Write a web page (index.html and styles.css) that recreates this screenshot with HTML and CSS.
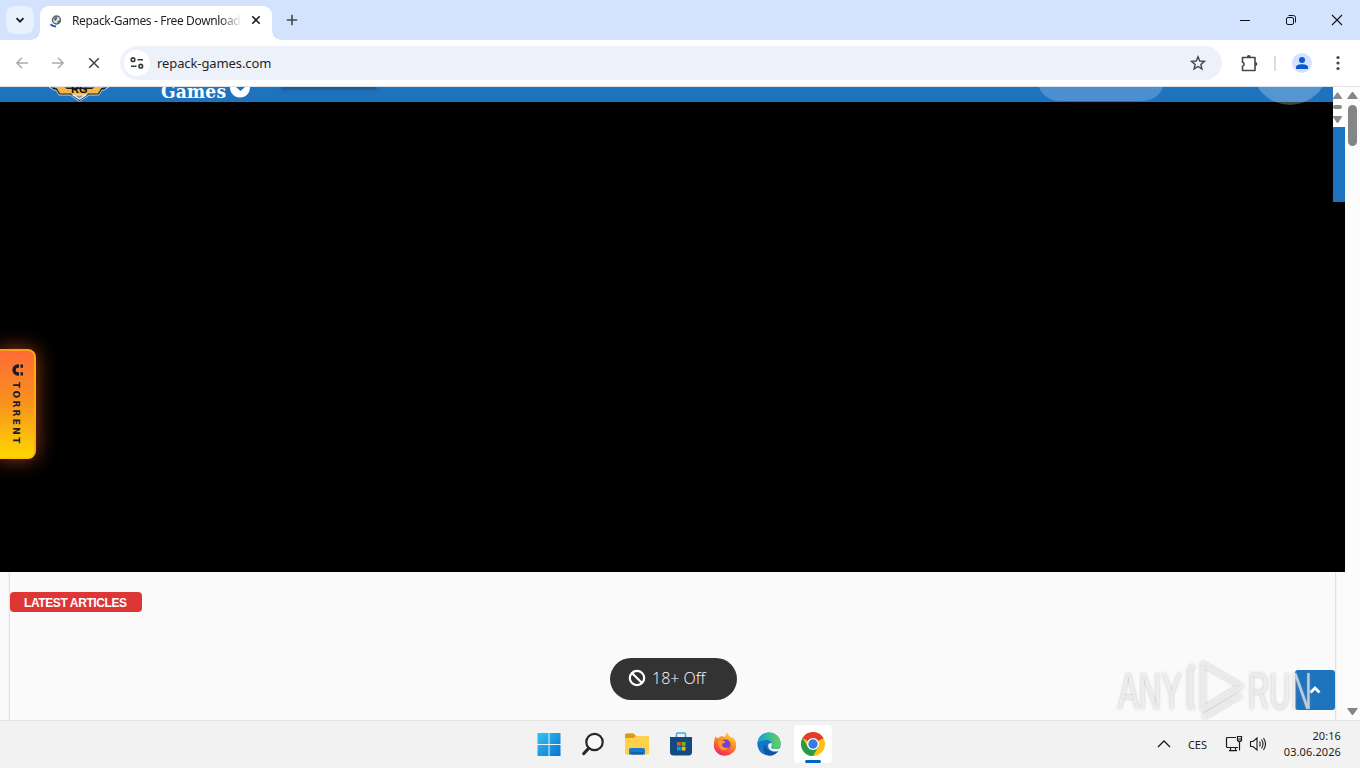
FILE: index.html
```html
<!DOCTYPE html>
<html lang="en">
<head>
    <meta charset="utf-8">
    <title>Repack-Games - Free Download</title>
    <link rel="stylesheet" href="styles.css">
</head>
<body>
    <div class="titlebar">
        <div class="tab-search">
            <svg width="10" height="10" viewBox="0 0 10 10"><path d="M1.500 3.200 5 6.700l3.500-3.500" fill="none" stroke="#1b1c20" stroke-width="1.800"/></svg>
        </div>
        <div class="tab">
            <svg class="favicon" width="14" height="16" viewBox="0 0 14 16">
                <circle cx="7.500" cy="8" r="4" fill="#dfe5e8" stroke="#59636b" stroke-width="1.400"/>
                <path d="M4.500 7 7 4.500 8.500 6 6.500 9zM8.500 9l2.500-1v2.500L8.500 12z" fill="#59636b"/>
                <path d="M1.500 12.200Q3.500 14.300 7 14.500" fill="none" stroke="#2860c4" stroke-width="2"/>
            </svg>
            <span class="tab-title">Repack-Games - Free Download</span>
            <svg class="tab-close" width="10" height="10" viewBox="0 0 10 10"><path d="M1.300 1.300l7.400 7.400M8.700 1.300 1.300 8.700" stroke="#1f1f1f" stroke-width="1.600"/></svg>
        </div>
        <svg class="new-tab" width="12" height="12" viewBox="0 0 12 12"><path d="M6 .8v10.400M.8 6h10.400" stroke="#43474e" stroke-width="1.600"/></svg>
        <div class="window-buttons">
            <svg width="12" height="12" viewBox="0 0 12 12"><path d="M1 6.500h10" stroke="#111"/></svg>
            <svg width="12" height="12" viewBox="0 0 12 12" fill="none" stroke="#111"><rect x="1.500" y="3.500" width="7" height="7" rx="1.500"/><path d="M3.500 1.500H8.500a2 2 0 0 1 2 2v5"/></svg>
            <svg width="12" height="12" viewBox="0 0 12 12"><path d="M1 1l10 10M11 1 1 11" stroke="#111" stroke-width="1.100"/></svg>
        </div>
    </div>

    <div class="toolbar">
        <div class="nav">
            <svg width="14" height="14" viewBox="0 0 14 14" fill="none" stroke="#aaacae" stroke-width="1.500"><path d="M13 7H2M7 1.800 1.800 7 7 12.200"/></svg>
            <svg width="14" height="14" viewBox="0 0 14 14" fill="none" stroke="#aaacae" stroke-width="1.500"><path d="M1 7h11M7 1.800 12.200 7 7 12.200"/></svg>
            <svg width="14" height="14" viewBox="0 0 14 14" fill="none" stroke="#45484c" stroke-width="1.600"><path d="M2.200 2.200l9.600 9.600M11.800 2.200 2.200 11.800"/></svg>
        </div>
        <div class="omnibox">
            <div class="site-info">
                <svg width="14" height="12" viewBox="0 0 14 12" fill="none" stroke="#37393d" stroke-width="1.600"><circle cx="3" cy="2.700" r="1.800"/><path d="M7.500 2.700H13M1 9.200h5.500"/><circle cx="10.800" cy="9.200" r="1.800"/></svg>
            </div>
            <span class="url">repack-games.com</span>
            <svg class="star" width="16" height="16" viewBox="0 0 16 16"><path d="M8 1.800l1.750 4.250 4.600.35-3.500 3 1.100 4.500L8 11.500l-3.950 2.400 1.100-4.500-3.500-3 4.600-.35z" fill="none" stroke="#44474b" stroke-width="1.400"/></svg>
        </div>
        <svg class="extensions" width="18" height="18" viewBox="0 0 18 18"><path d="M2.500 3.500h12.500v13H2.500v-4.300a2 2 0 0 0 0-3.900z" fill="none" stroke="#44474b" stroke-width="1.600" stroke-linejoin="round"/><path d="M6.800 3a2 2 0 0 1 4 0zM15.300 8a2 2 0 0 1 0 4z" fill="#44474b"/></svg>
        <span class="divider"></span>
        <div class="profile">
            <svg width="14" height="14" viewBox="0 0 14 14" fill="#0b57d0"><circle cx="7" cy="4" r="3"/><path d="M1 13v-1.800C1 9 4.500 8.200 7 8.200s6 .8 6 3V13z"/></svg>
        </div>
        <svg class="menu" width="4" height="16" viewBox="0 0 4 16" fill="#44474b"><circle cx="2" cy="2.500" r="1.600"/><circle cx="2" cy="8" r="1.600"/><circle cx="2" cy="13.500" r="1.600"/></svg>
    </div>

    <div class="viewport">
        <div class="page">
            <div class="hero">
                <div class="hero-main">
                    <div class="site-header">
                        <svg class="logo" width="64" height="15" viewBox="0 0 64 15">
                            <path d="M2 0h60l-5 3h-2l-3 5H42l-9.500 6.500L23 8H12L9 3H7z" fill="#15202b" stroke="#e8edf2" stroke-width=".8"/>
                            <path d="M7 0h10l3 2h25l3-2h9l-3 1.500-3 5H41l-8.500 5.500L24 6.500H13l-3-5z" fill="#f6b73c"/>
                            <path d="M24 7.500h17l-8.500 5.500z" fill="#eef2f7"/><path d="M28 8.500h9l-4.500 3z" fill="#8c99a8"/>
                            <text x="24" y="6" class="logo-rg">RG</text>
                        </svg>
                        <span class="site-name">Games</span>
                        <svg class="badge" width="22" height="15" viewBox="0 0 22 15"><path d="M1 0h20c0 6-4 10.500-10 10.500S1 6 1 0z" fill="#fff"/><path d="M7 0h9l-4.500 4z" fill="#1e73be"/></svg>
                        <span class="header-shadow"></span>
                        <span class="search-pill"></span>
                        <span class="round-button"></span>
                    </div>
                </div>
                <div class="hero-side">
                    <div class="mini-scroll">
                        <svg width="12" height="40" viewBox="0 0 12 40" fill="#8b8b8b"><path d="M4 5.500h1l4 5.500v1H0v-1z"/><rect x="0" y="18" width="9" height="4" rx="2"/><path d="M0 29h9v1l-4 6H4l-4-6z"/></svg>
                    </div>
                    <div class="side-blue"></div>
                </div>
                <div class="torrent">
                    <svg width="12" height="12" viewBox="0 0 12 12"><path d="M7 2H6a4 4 0 0 0 0 8h1" fill="none" stroke="#1d1a2b" stroke-width="3.400"/><path d="M8.500.4H11v3.300H8.500zM8.500 8.300H11v3.300H8.500z" fill="#1d1a2b"/></svg>
                    <span>TORRENT</span>
                </div>
            </div>
            <div class="articles">
                <span class="label">LATEST ARTICLES</span>
            </div>
            <div class="adult-toggle">
                <svg width="18" height="18" viewBox="0 0 18 18" fill="none" stroke="#fff" stroke-width="2.200"><circle cx="9" cy="9" r="7.200"/><path d="M4 4l10 10"/></svg>
                <span>18+ Off</span>
            </div>
            <div class="to-top">
                <svg width="12" height="10" viewBox="0 0 12 10"><path d="M1.500 7.500 6 3l4.500 4.500" fill="none" stroke="#fff" stroke-width="2.800"/></svg>
            </div>
        </div>
        <div class="scrollbar">
            <svg width="11" height="9" viewBox="0 0 11 9" fill="#858585"><path d="M5 1h1l4.500 6v1H.5V7z"/></svg>
            <span class="thumb"></span>
            <svg class="down" width="11" height="9" viewBox="0 0 11 9" fill="#858585"><path d="M.5 1h10v1L6 8H5L.5 2z"/></svg>
        </div>
        <svg class="watermark" width="204" height="72" viewBox="0 0 204 72">
            <defs>
                <g id="mark">
                    <text x="4" y="56" textLength="64" lengthAdjust="spacingAndGlyphs">ANY</text>
                    <text x="134" y="56" textLength="64" lengthAdjust="spacingAndGlyphs">RUN</text>
                    <path d="M89 11 127 33 89 56zM80 13l-4 2.500v38l4 1.500M89 64l38-22"/>
                </g>
            </defs>
            <use href="#mark" class="mark-shadow"/>
            <use href="#mark" class="mark-face"/>
        </svg>
    </div>

    <div class="taskbar">
        <div class="apps">
            <div class="app">
                <svg width="24" height="24" viewBox="0 0 24 24"><defs><linearGradient id="win" x2="1" y2="1"><stop offset="0" stop-color="#35c4f5"/><stop offset="1" stop-color="#0872cf"/></linearGradient></defs><path d="M.5 1H11.500v11H.5zM12.500 1h11v11h-11zM.5 13h11v11H.5zM12.500 13h11v11h-11z" fill="url(#win)"/></svg>
            </div>
            <div class="app">
                <svg width="24" height="24" viewBox="0 0 24 24" fill="none" stroke="#27282a"><circle cx="13.500" cy="10" r="8.200" stroke-width="2.200" fill="#f7f8f8"/><path d="M7.500 16.500 2.800 21.500" stroke-width="3.200" stroke-linecap="round"/></svg>
            </div>
            <div class="app">
                <svg width="26" height="24" viewBox="0 0 26 24"><path d="M1 3q0-1.500 1.500-1.500h7L12 4h12q1 0 1 1v16q0 1.500-1.500 1.500h-21Q1 22.500 1 21z" fill="#ffd04b"/><path d="M1 6V3q0-1.500 1.500-1.500h7L12 4 9.500 6z" fill="#d99b10"/><path d="M5 22.500V18q0-2 2-2h12q2 0 2 2v4.500z" fill="#1879cf"/><path d="M7 20h12v2.500H7z" fill="#1260ad"/></svg>
            </div>
            <div class="app">
                <svg width="24" height="24" viewBox="0 0 24 24"><path d="M7.500 6V2q0-1 1-1h7q1 0 1 1v4" fill="none" stroke="#43ace3" stroke-width="1.600"/><path d="M1 5h22v15q0 3.500-3.500 3.500h-15Q1 23.500 1 20z" fill="#134a80"/><path d="M8 10h3.800v3.800H8z" fill="#f25022"/><path d="M12.700 10h3.800v3.800h-3.800z" fill="#7fba00"/><path d="M8 14.700h3.800v3.800H8z" fill="#00a4ef"/><path d="M12.700 14.700h3.800v3.800h-3.800z" fill="#ffb900"/></svg>
            </div>
            <div class="app">
                <svg width="24" height="24" viewBox="0 0 24 24"><defs><linearGradient id="fox" x1=".8" x2=".3" y2="1"><stop offset="0" stop-color="#ffdf3e"/><stop offset=".45" stop-color="#ff8a23"/><stop offset="1" stop-color="#f5215d"/></linearGradient></defs><path d="M2.500 4.500 5 6.500Q7 3.500 9.500 4L12 5q0-3 2.500-4.500 1 3.500 4 5.500l1-1Q23.500 9 23.200 13.500A11.200 10.500 0 0 1 .8 13Q.8 8 2.500 4.500z" fill="url(#fox)"/><circle cx="12.500" cy="12.500" r="5" fill="#7541cf"/><path d="M5 9q3-1.500 5.500 0l2 .5q-.5 2-3 2-1 1.500 0 3 3 2.500 6 .5-2 4-6 3-5-2-4.500-9z" fill="#ff9a2a"/></svg>
            </div>
            <div class="app">
                <svg width="24" height="24" viewBox="0 0 24 24"><defs><linearGradient id="edge" x2="1"><stop offset="0" stop-color="#189fd8"/><stop offset="1" stop-color="#62d653"/></linearGradient></defs><circle cx="12" cy="12" r="11.600" fill="#1476ca"/><path d="M.5 11A11.600 11.600 0 0 1 23.600 11c.4 4-2.600 6-6.600 6-3 0-3.500-1.500-2.500-3s.3-6-5-6C5 8 2 9.500.5 11z" fill="url(#edge)"/><path d="M8.500 12.500c0 6 6 8.500 13.300 5.700C19 22.500 15 24 11.500 23.400 6 22 5 15 8.500 12.500z" fill="#12549f"/><path d="M12 11.500c-1.500 2-1.300 6 3.500 7.700 3 .8 5.500.2 7-1l1.500-3c-2 1.500-4 2-6.500 1.900-3.500-.2-4-1.800-3-3.100.6-1 .6-2.200 0-3z" fill="#f3f3f3"/></svg>
            </div>
            <div class="app active">
                <svg width="26" height="26" viewBox="0 0 26 26"><circle cx="13" cy="13" r="12" fill="#fbc116"/><path d="M13 13 2.600 7A12 12 0 0 1 23.400 7z" fill="#e33b2e"/><path d="M2.600 7a12 12 0 0 0 10.400 18l5.200-9L13 13 7.800 16z" fill="#269c49"/><circle cx="13" cy="13" r="6" fill="#fff"/><circle cx="13" cy="13" r="4.700" fill="#3779e5"/></svg>
            </div>
        </div>
        <div class="tray">
            <svg class="chevron" width="14" height="8" viewBox="0 0 14 8"><path d="M1 7l6-6 6 6" fill="none" stroke="#1b1b1b" stroke-width="1.300"/></svg>
            <span class="lang">CES</span>
            <svg class="network" width="18" height="18" viewBox="0 0 18 18" fill="none" stroke="#1b1b1b" stroke-width="1.200"><path d="M11 2.500H2.500Q1.500 2.500 1.500 3.500v8q0 1 1 1h10.500M5.500 12.500v3M4 15.600h8M10.500 12.500v3M14.500 7v8.500M12.500 1.500h4v4q-2 2-4 0zM12.500 4h4"/></svg>
            <svg class="volume" width="18" height="16" viewBox="0 0 18 16" fill="none" stroke="#1b1b1b" stroke-width="1.100"><path d="M1.500 5.500H4l4-3.500v12L4 10.500H1.500zM10.500 5.500q1.500 2.500 0 5M12.500 3.500q3 4.500 0 9M14.500 2q4 6 0 12"/></svg>
            <div class="clock">
                <span>20:16</span>
                <span>03.06.2026</span>
            </div>
        </div>
    </div>
</body>
</html>
```
FILE: styles.css
```css
* {
    box-sizing: border-box;
}
body {
    margin: 0;
    width: 1360px;
    height: 768px;
    overflow: hidden;
    display: flex;
    flex-direction: column;
    font-family: "Noto Sans", sans-serif;
    font-size: 12px;
    color: #1f1f1f;
    background-color: #fff;
}
svg {
    display: block;
    flex: none;
}

/* browser window */
.titlebar {
    height: 40px;
    flex: none;
    display: flex;
    align-items: center;
    padding-left: 6px;
    background-color: #d3e3fd;
}
.tab-search {
    width: 28px;
    height: 28px;
    border-radius: 9px;
    background-color: #e9f1fe;
    display: flex;
    align-items: center;
    justify-content: center;
}
.tab {
    position: relative;
    width: 232px;
    height: 34px;
    margin: 6px 0 0 6px;
    padding: 0 11px 6px 9px;
    border-radius: 9px 9px 0 0;
    background-color: #fff;
    display: flex;
    align-items: center;
}
.tab::before, .tab::after {
    content: "";
    position: absolute;
    bottom: 0;
    width: 9px;
    height: 9px;
}
.tab::before {
    left: -9px;
    background: radial-gradient(circle at 0 0, transparent 8.5px, #fff 9px);
}
.tab::after {
    right: -9px;
    background: radial-gradient(circle at 100% 0, transparent 8.5px, #fff 9px);
}
.tab-title {
    width: 168px;
    margin-left: 9px;
    overflow: hidden;
    white-space: nowrap;
    font-size: 12px;
    letter-spacing: -0.36px;
    -webkit-mask-image: linear-gradient(to right, #000 148px, transparent 170px);
    mask-image: linear-gradient(to right, #000 148px, transparent 170px);
}
.tab-close {
    margin-left: auto;
}
.new-tab {
    margin-left: 14px;
}
.window-buttons {
    margin-left: auto;
    margin-right: 17px;
    display: flex;
    gap: 34px;
}
.toolbar {
    height: 47px;
    flex: none;
    display: flex;
    align-items: center;
    padding: 0 20px 0 15px;
    border-bottom: 1px solid #dfe2e8;
    background-color: #fff;
    border-radius: 8px 8px 0 0;
}
.nav {
    display: flex;
    gap: 22px;
}
.omnibox {
    width: 1102px;
    height: 34px;
    margin-left: 19px;
    padding: 0 16px 0 4px;
    border-radius: 17px;
    background-color: #edf1fa;
    display: flex;
    align-items: center;
}
.site-info {
    width: 26px;
    height: 26px;
    border-radius: 50%;
    background-color: #fff;
    display: flex;
    align-items: center;
    justify-content: center;
}
.url {
    margin-left: 7px;
    font-size: 13px;
    letter-spacing: -0.1px;
}
.star {
    margin-left: auto;
}
.extensions {
    margin-left: 18px;
}
.divider {
    width: 2px;
    height: 15px;
    margin-left: 16px;
    background-color: #d6def0;
}
.profile {
    width: 20px;
    height: 20px;
    margin-left: 16px;
    border-radius: 50%;
    background-color: #d3e3fd;
    display: flex;
    align-items: center;
    justify-content: center;
}
.menu {
    margin-left: auto;
}

/* page */
.viewport {
    position: relative;
    height: 633px;
    flex: none;
    display: flex;
    background-color: #fff;
}
.page {
    position: relative;
    width: 1345px;
    display: flex;
    flex-direction: column;
    background-color: #fafafa;
}
.hero {
    position: relative;
    height: 485px;
    display: flex;
    background-color: #000;
}
.hero-main {
    width: 1333px;
}
.hero-side {
    width: 12px;
}
.mini-scroll {
    height: 40px;
    background-color: #fff;
}
.side-blue {
    height: 75px;
    background-color: #1e73be;
}
.site-header {
    height: 15px;
    display: flex;
    align-items: flex-start;
    padding-left: 47px;
    background-color: #1e73be;
    clip-path: inset(0 0 -10px 0);
}
.logo-rg {
    font: bold 11px "Liberation Sans", sans-serif;
    fill: #111;
}
.site-name {
    width: 69px;
    margin: -10px 0 0 50px;
    color: #fff;
    font: bold 19px/28px "DejaVu Serif Condensed", "DejaVu Serif", serif;
    letter-spacing: 0.2px;
}
.badge {
    margin-left: -1px;
}
.header-shadow {
    width: 94px;
    height: 2px;
    margin-left: 31px;
    background-color: #195b96;
    box-shadow: 0 0 4px 1px #195b96;
}
.search-pill {
    width: 128px;
    height: 45px;
    margin: -31px 0 0 661px;
    border-radius: 23px;
    background-color: #4b8fd0;
}
.round-button {
    width: 76px;
    height: 76px;
    margin: -58px 0 0 87px;
    border-radius: 50%;
    background: linear-gradient(#5596d1 73px, #3c4740 73px);
}
.torrent {
    position: absolute;
    left: -2px;
    top: 262px;
    width: 38px;
    height: 110px;
    padding: 13px 0 0 1px;
    border: 2px solid #ffa21c;
    border-color: #ff9d13 #ffa914 #ffc014;
    border-radius: 0 8px 8px 0;
    background: linear-gradient(#ff6b35, #f7931e 50%, #ffd700);
    box-shadow: 0 0 20px rgba(255, 107, 35, 0.6);
    display: flex;
    flex-direction: column;
    align-items: center;
    gap: 6px;
    font: bold 9px/10px "DejaVu Sans", sans-serif;
    color: #1d1a2b;
}
.torrent span {
    writing-mode: vertical-rl;
    letter-spacing: 2.3px;
    margin-right: 3px;
}
.articles {
    flex: 1;
    margin: 0 10px;
    padding-top: 20px;
    box-shadow: 0 0 2px #aaa;
    clip-path: inset(0 -3px);
    background-color: #fafafa;
}
.label {
    display: block;
    width: 132px;
    height: 20px;
    padding-left: 14px;
    border-radius: 4px;
    background-color: #de3535;
    color: #fff;
    font: bold 12px/22px "Liberation Sans", Arial, sans-serif;
    letter-spacing: -0.4px;
}
.adult-toggle {
    position: absolute;
    left: 610px;
    top: 571px;
    width: 127px;
    height: 42px;
    padding: 0 0 2px 18px;
    border-radius: 21px;
    background-color: #333;
    color: #fff;
    display: flex;
    align-items: center;
    gap: 6px;
    font: 300 16px "Open Sans", sans-serif;
}
.to-top {
    position: absolute;
    right: 10px;
    top: 583px;
    width: 40px;
    height: 40px;
    border-radius: 3px;
    background-color: #1e73be;
    display: flex;
    align-items: center;
    justify-content: center;
}
.scrollbar {
    width: 15px;
    padding: 4px 0 4px 2px;
    display: flex;
    flex-direction: column;
    background-color: #fcfcfc;
}
.thumb {
    width: 9px;
    height: 41px;
    margin: 5px 0 0 1px;
    border-radius: 5px;
    background-color: #858585;
}
.down {
    margin-top: auto;
}
.watermark {
    position: absolute;
    left: 1114px;
    top: 566px;
}
.watermark text {
    font: 51px "Liberation Sans", sans-serif;
    stroke-width: 0;
}
.watermark path {
    fill: none;
    stroke-width: 5;
    stroke-linejoin: round;
}
.mark-shadow {
    fill: #888;
    stroke: #888;
    opacity: 0.5;
    filter: blur(1.5px);
}
.mark-face {
    fill: #fafafa;
    stroke: #fcfcfc;
    opacity: 0.65;
}

/* taskbar */
.taskbar {
    position: relative;
    height: 48px;
    flex: none;
    display: flex;
    justify-content: flex-end;
    border-top: 1px solid #e5e5e5;
    background-color: #f2f2f2;
}
.apps {
    position: absolute;
    left: 530px;
    top: 4px;
    display: flex;
    gap: 6px;
}
.app {
    position: relative;
    width: 38px;
    height: 38px;
    border-radius: 4px;
    display: flex;
    align-items: center;
    justify-content: center;
}
.active {
    background-color: #fff;
}
.active::after {
    content: "";
    position: absolute;
    left: 11px;
    bottom: 0;
    width: 16px;
    height: 3px;
    border-radius: 2px;
    background-color: #0067c0;
}
.tray {
    display: flex;
    align-items: center;
    padding: 0 19px 2px 0;
    color: #1b1b1b;
}
.lang {
    margin: 2px 0 0 17px;
    font-size: 11px;
}
.network {
    margin-left: 18px;
}
.volume {
    margin-left: 6px;
}
.clock {
    width: 74px;
    display: flex;
    flex-direction: column;
    align-items: flex-end;
    font-size: 11px;
    line-height: 16px;
    letter-spacing: 0.1px;
    white-space: nowrap;
}
```
